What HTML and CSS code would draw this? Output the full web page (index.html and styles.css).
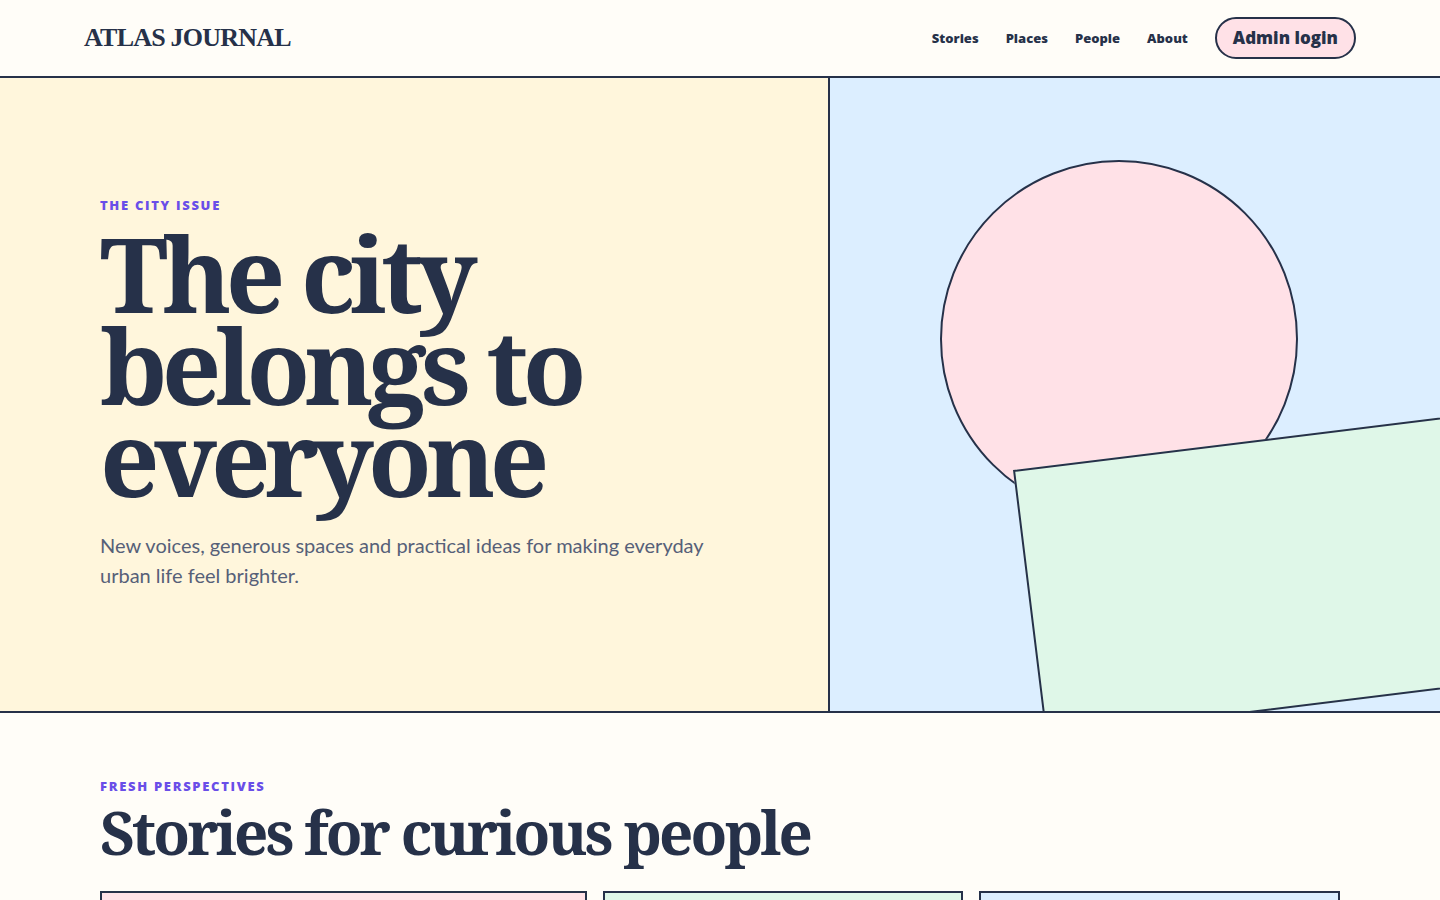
FILE: index.html
```html
<!DOCTYPE html>
<html lang="en">
<head>
  <meta charset="UTF-8" />
  <meta name="viewport" content="width=device-width, initial-scale=1.0" />
  <title>Atlas Journal</title>
  <link rel="stylesheet" href="styles.css">
</head>
<body>
  <header class="site-header">
    <a class="logo" href="#">ATLAS JOURNAL</a>
    <nav class="site-nav">
      <a href="#stories">Stories</a>
      <a href="#places">Places</a>
      <a href="#people">People</a>
      <a href="#about">About</a>
      <button type="button" class="login">Admin login</button>
    </nav>
  </header>
  <main>
    <section class="hero">
      <div class="hero-copy">
        <p class="eyebrow">THE CITY ISSUE</p>
        <h1>The city belongs to everyone</h1>
        <p class="intro">New voices, generous spaces and practical ideas for making everyday urban life feel brighter.</p>
      </div>
      <div class="hero-art">
        <div class="circle"></div>
        <div class="block"></div>
      </div>
    </section>
    <section class="stories" id="stories">
      <p class="eyebrow">FRESH PERSPECTIVES</p>
      <h2>Stories for curious people</h2>
      <div class="story-grid">
        <article class="card pink"></article>
        <article class="card green"></article>
        <article class="card blue"></article>
      </div>
    </section>
  </main>
</body>
</html>
```

FILE: styles.css
```css
:root {
  --ink: #263149;
  --paper: #fffdf8;
  --cream: #fff6dc;
  --blue: #dceeff;
  --pink: #ffe1e7;
  --green: #dff7e8;
  --violet: #694ee8;
}
* {
  box-sizing: border-box;
}
body {
  margin: 0;
  font-family: Lato, sans-serif;
  background: var(--paper);
  color: var(--ink);
}
h1, h2 {
  font-family: "Noto Serif", serif;
  font-weight: 700;
}
.site-header {
  display: flex;
  align-items: center;
  justify-content: space-between;
  min-height: 78px;
  padding: 0 84px;
  border-bottom: 2px solid var(--ink);
}
.site-header a {
  color: inherit;
  text-decoration: none;
}
.logo {
  font-family: "Liberation Serif", serif;
  font-size: 26px;
  font-weight: 700;
  letter-spacing: -0.03em;
}
.site-nav {
  display: flex;
  align-items: center;
  gap: 27px;
  font-family: "Open Sans", sans-serif;
  font-size: 13px;
  font-weight: 800;
}
.login {
  height: 42px;
  padding: 0 16px;
  border: 2px solid var(--ink);
  border-radius: 21px;
  background: var(--pink);
  color: inherit;
  font: inherit;
  font-size: 17px;
  line-height: 36px;
  cursor: pointer;
}
.hero {
  display: grid;
  grid-template-columns: 1.36fr 1fr;
  min-height: 635px;
  border-bottom: 2px solid var(--ink);
}
.hero-copy {
  display: flex;
  flex-direction: column;
  justify-content: center;
  padding: 40px 100px 44px;
  background: var(--cream);
  border-right: 2px solid var(--ink);
}
.eyebrow {
  margin: 0;
  font-family: "Open Sans", sans-serif;
  font-size: 13px;
  line-height: 18px;
  font-weight: 800;
  letter-spacing: 0.13em;
  color: var(--violet);
}
h1 {
  max-width: 600px;
  margin: 13px 0 27px;
  font-size: 104px;
  line-height: 92px;
  letter-spacing: -0.055em;
}
.intro {
  margin: 0;
  font-size: 20px;
  line-height: 30px;
  color: #566078;
}
.hero-art {
  position: relative;
  overflow: hidden;
  background: var(--blue);
}
.circle {
  position: absolute;
  top: 13%;
  left: 18%;
  width: 358px;
  height: 358px;
  border: 2px solid var(--ink);
  border-radius: 50%;
  background: var(--pink);
}
.block {
  position: absolute;
  top: 62%;
  left: 30%;
  width: 80%;
  height: 270px;
  border: 2px solid var(--ink);
  background: var(--green);
  transform: rotate(-7deg);
  transform-origin: top left;
}
.stories {
  padding: 64px 100px;
}
h2 {
  margin: 3px 0 25px;
  font-size: 60px;
  line-height: 68px;
  letter-spacing: -0.048em;
}
.story-grid {
  display: grid;
  grid-template-columns: 1.35fr 1fr 1fr;
  gap: 16px;
}
.card {
  min-height: 320px;
  border: 2px solid var(--ink);
}
.pink {
  background: var(--pink);
}
.green {
  background: var(--green);
}
.blue {
  background: var(--blue);
}
```
